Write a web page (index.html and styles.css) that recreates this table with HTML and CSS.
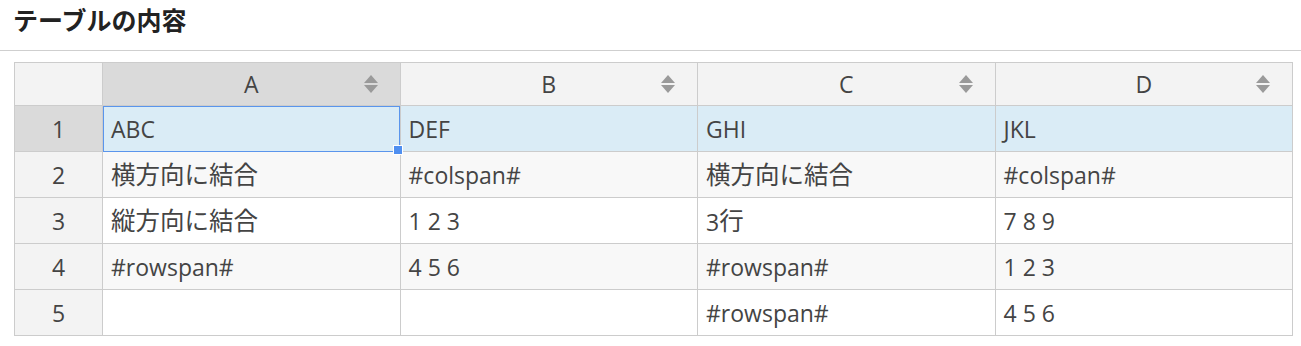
FILE: index.html
```html
<!DOCTYPE html>
<html lang="ja">
<head>
<meta charset="utf-8">
<link rel="stylesheet" href="styles.css">
</head>
<body>
<h1 class="title">テーブルの内容</h1>
<div class="wrap">
<table class="grid">
  <colgroup>
    <col class="c-num"><col class="c-data"><col class="c-data"><col class="c-data"><col class="c-data">
  </colgroup>
  <thead>
    <tr>
      <th class="corner"></th>
      <th class="head active"><span>A</span><svg class="sort" viewBox="0 0 14 20"><path d="M7 1 L14 9 L0 9 Z M0 11 L14 11 L7 19 Z"/></svg></th>
      <th class="head"><span>B</span><svg class="sort" viewBox="0 0 14 20"><path d="M7 1 L14 9 L0 9 Z M0 11 L14 11 L7 19 Z"/></svg></th>
      <th class="head"><span>C</span><svg class="sort" viewBox="0 0 14 20"><path d="M7 1 L14 9 L0 9 Z M0 11 L14 11 L7 19 Z"/></svg></th>
      <th class="head"><span>D</span><svg class="sort" viewBox="0 0 14 20"><path d="M7 1 L14 9 L0 9 Z M0 11 L14 11 L7 19 Z"/></svg></th>
    </tr>
  </thead>
  <tbody>
    <tr class="row sel">
      <td class="num active">1</td>
      <td class="cell focus">ABC<span class="handle"></span></td>
      <td class="cell">DEF</td>
      <td class="cell">GHI</td>
      <td class="cell">JKL</td>
    </tr>
    <tr class="row even">
      <td class="num">2</td>
      <td class="cell"><span class="ja">横方向に結合</span></td>
      <td class="cell">#colspan#</td>
      <td class="cell"><span class="ja">横方向に結合</span></td>
      <td class="cell">#colspan#</td>
    </tr>
    <tr class="row">
      <td class="num">3</td>
      <td class="cell"><span class="ja">縦方向に結合</span></td>
      <td class="cell">1 2 3</td>
      <td class="cell">3<span class="ja">行</span></td>
      <td class="cell">7 8 9</td>
    </tr>
    <tr class="row even">
      <td class="num">4</td>
      <td class="cell">#rowspan#</td>
      <td class="cell">4 5 6</td>
      <td class="cell">#rowspan#</td>
      <td class="cell">1 2 3</td>
    </tr>
    <tr class="row">
      <td class="num">5</td>
      <td class="cell"></td>
      <td class="cell"></td>
      <td class="cell">#rowspan#</td>
      <td class="cell">4 5 6</td>
    </tr>
  </tbody>
</table>
</div>
</body>
</html>
```

FILE: styles.css
```css
html, body {
  margin: 0;
  padding: 0;
  background: #fff;
}
body {
  font-family: "Open Sans", "Noto Sans CJK JP", sans-serif;
  color: #333;
}
.title {
  margin: 0;
  height: 51px;
  box-sizing: border-box;
  padding: 3px 0 0 13px;
  font-family: "Noto Sans CJK JP", sans-serif;
  font-size: 25px;
  line-height: 32px;
  font-weight: 700;
  color: #222;
  border-bottom: 1px solid #cfcfcf;
}
.wrap {
  padding: 11px 0 0 14px;
}
.grid {
  border-collapse: collapse;
  table-layout: fixed;
  width: 1278px;
  font-size: 23px;
}
.c-num { width: 88px; }
.c-data { width: 297.5px; }
.grid th, .grid td {
  border: 1px solid #ccc;
  padding: 0;
  font-weight: 400;
}
.corner {
  background: #f3f3f3;
  height: 42px;
}
.head {
  background: #f3f3f3;
  height: 42px;
  position: relative;
  text-align: center;
  color: #444;
}
.head.active {
  background: #dadada;
}
.head span {
  line-height: 42px;
}
.sort {
  position: absolute;
  right: 22px;
  top: 11px;
  width: 14px;
  height: 20px;
  fill: #9a9a9a;
}
.row td {
  height: 45px;
  background: #fff;
}
.row.even td {
  background: #f8f8f8;
}
.row.sel td {
  background: #daecf6;
}
.num {
  text-align: center;
  color: #444;
  background: #f3f3f3 !important;
}
.num.active {
  background: #dadada !important;
}
.cell {
  padding: 0 8px !important;
  white-space: nowrap;
  color: #444;
}
.ja {
  font-family: "Noto Sans CJK JP", sans-serif;
  font-size: 24.5px;
  position: relative;
  top: -1px;
}
.cell.focus {
  position: relative;
  outline: 1px solid #5a95ec;
  outline-offset: -1px;
}
.handle {
  position: absolute;
  right: -3px;
  bottom: -4px;
  width: 8px;
  height: 8px;
  background: #4f8ff0;
  border: 1px solid #fff;
  z-index: 2;
}
```
